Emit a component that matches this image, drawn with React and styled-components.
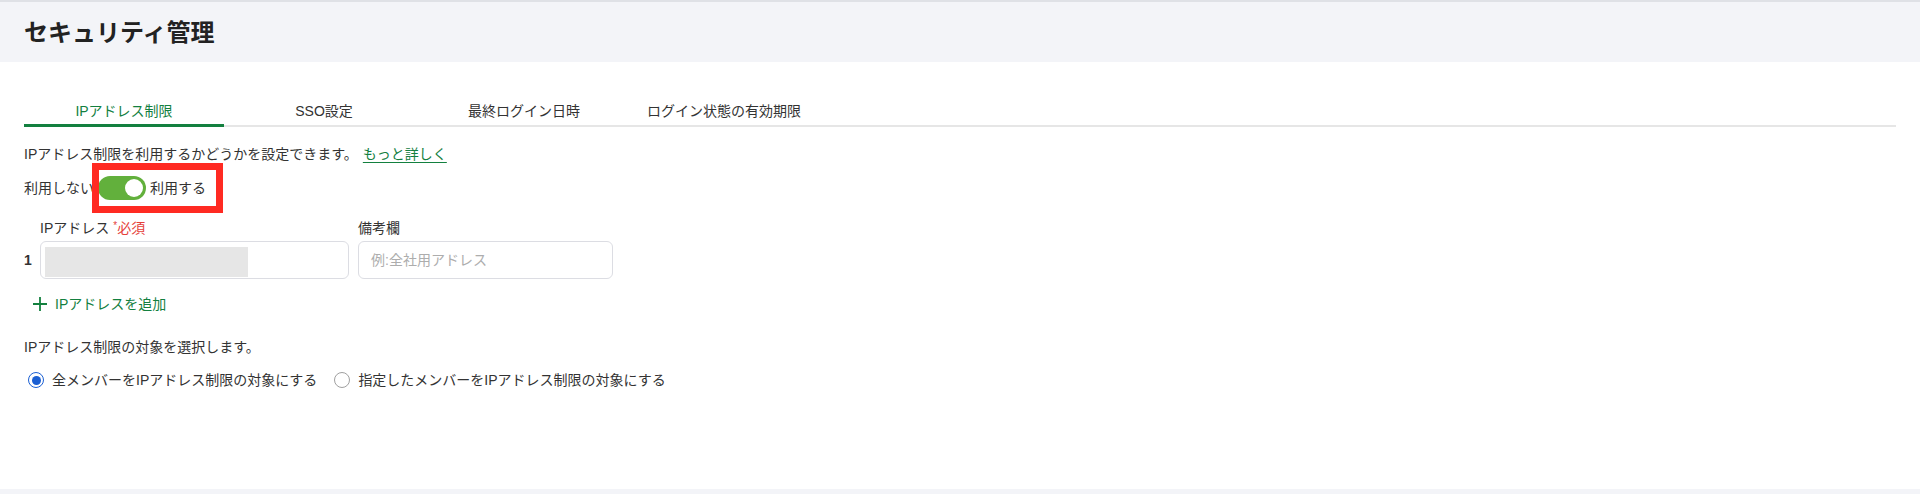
import React, { useState } from 'react';
import styled, { createGlobalStyle } from 'styled-components';

const GREEN = '#13803f';
const TOGGLE_GREEN = '#62b03c';
const TEXT = '#333333';

const GlobalStyle = createGlobalStyle`
  html, body {
    margin: 0;
    padding: 0;
    background: #f3f4f8;
  }
  body {
    font-family: "Liberation Sans", "Noto Sans CJK JP", sans-serif;
    color: ${TEXT};
  }
`;

const Page = styled.div`
  height: 494px;
  background: #f3f4f8;
  border-top: 2px solid #dfe1e6;
  box-sizing: border-box;
  overflow: hidden;
`;

const Header = styled.header`
  height: 60px;
  display: flex;
  align-items: center;
  padding: 1px 24px 0;
  box-sizing: border-box;
`;

const Title = styled.h1`
  margin: 0;
  font-size: 24px;
  font-weight: 700;
  line-height: 32px;
  color: #222;
`;

const Panel = styled.main`
  height: 427px;
  background: #fff;
  padding: 39px 24px 0;
  box-sizing: border-box;
  font-size: 14px;
  line-height: 20px;
`;

const TabList = styled.div`
  display: flex;
  border-bottom: 2px solid #e6e6e6;
`;

const Tab = styled.button`
  min-width: 200px;
  padding: 0 12px 3px;
  margin-bottom: -2px;
  border: 0;
  border-bottom: 3px solid ${(p) => (p.$active ? GREEN : 'transparent')};
  background: none;
  font: inherit;
  font-size: 14px;
  line-height: 20px;
  color: ${(p) => (p.$active ? GREEN : TEXT)};
  cursor: pointer;
`;

const Description = styled.p`
  margin: ${(p) => p.$top}px 0 0;
`;

const Link = styled.a`
  margin-left: 5px;
  color: ${GREEN};
  text-decoration: underline;
  text-underline-offset: 3px;
`;

const ToggleRow = styled.div`
  margin-top: 12px;
  display: flex;
  align-items: center;
  gap: 4px;
  height: 24px;
`;

const ToggleGroup = styled.span`
  position: relative;
  display: inline-flex;
  align-items: center;
  gap: 4px;
  height: 24px;
`;

const Switch = styled.button`
  position: relative;
  display: block;
  width: 48px;
  height: 24px;
  margin: 0;
  padding: 0;
  border: 0;
  border-radius: 12px;
  background: ${(p) => (p.$on ? TOGGLE_GREEN : '#c4c4c4')};
  cursor: pointer;

  &::after {
    content: '';
    position: absolute;
    top: 3px;
    left: ${(p) => (p.$on ? 27 : 3)}px;
    width: 18px;
    height: 18px;
    border-radius: 50%;
    background: #fff;
  }
`;

/* red annotation frame drawn over the switch */
const Highlight = styled.span`
  position: absolute;
  top: -13px;
  left: -6px;
  width: 131px;
  height: 50px;
  border: 7px solid #ff2a22;
  box-sizing: border-box;
  pointer-events: none;
`;

const FieldGrid = styled.div`
  margin-top: 18px;
  display: grid;
  grid-template-columns: 7px 309px 255px;
  grid-template-rows: 20px 38px;
  column-gap: 9px;
  row-gap: 3px;
`;

const Label = styled.span`
  grid-column: ${(p) => p.$col};
  white-space: nowrap;
  line-height: 20px;
`;

const Required = styled.span`
  margin-left: 4px;
  color: #e5413a;
`;

const Asterisk = styled.span`
  position: relative;
  top: -4px;
  font-size: 10px;
  line-height: 0;
`;

const Index = styled.span`
  align-self: center;
  font-weight: 700;
`;

const Field = styled.div`
  height: 38px;
  border: 1px solid #dcdde3;
  border-radius: 6px;
  box-sizing: border-box;
  display: flex;
  align-items: ${(p) => (p.$masked ? 'flex-start' : 'center')};
  padding: ${(p) => (p.$masked ? '5px 0 0 4px' : '0 12px')};
  color: #adadad;
`;

const Mask = styled.span`
  width: 203px;
  height: 30px;
  background: #e6e6e6;
`;

const AddButton = styled.button`
  margin-top: 15px;
  display: flex;
  align-items: center;
  gap: 7px;
  padding: 0 0 0 8px;
  height: 20px;
  border: 0;
  background: none;
  font: inherit;
  color: ${GREEN};
  cursor: pointer;
`;

const RadioRow = styled.div`
  margin-top: 13px;
  display: flex;
  align-items: center;
  gap: 17px;
  padding-left: 4px;
`;

const RadioOption = styled.label`
  display: flex;
  align-items: center;
  gap: 8px;
  cursor: pointer;
`;

const RadioMark = styled.span`
  width: 16px;
  height: 16px;
  border-radius: 50%;
  box-sizing: border-box;
  border: ${(p) => (p.$checked ? '1.5px solid #1b5fd3' : '1.5px solid #a0a0a0')};
  display: flex;
  align-items: center;
  justify-content: center;

  &::after {
    content: '';
    width: 9px;
    height: 9px;
    border-radius: 50%;
    background: ${(p) => (p.$checked ? '#1b5fd3' : 'transparent')};
  }
`;

const TABS = ['IPアドレス制限', 'SSO設定', '最終ログイン日時', 'ログイン状態の有効期限'];
const TARGETS = ['全メンバーをIPアドレス制限の対象にする', '指定したメンバーをIPアドレス制限の対象にする'];

const PlusIcon = () => (
  <svg width="16" height="16" viewBox="0 0 16 16" fill="none">
    <path d="M8 1v14M1 8h14" stroke={GREEN} strokeWidth="1.8" />
  </svg>
);

export default function App() {
  const [tab, setTab] = useState(0);
  const [enabled, setEnabled] = useState(true);
  const [target, setTarget] = useState(0);

  return (
    <Page>
      <GlobalStyle />
      <Header>
        <Title>セキュリティ管理</Title>
      </Header>
      <Panel>
        <TabList>
          {TABS.map((label, i) => (
            <Tab key={label} $active={tab === i} onClick={() => setTab(i)}>
              {label}
            </Tab>
          ))}
        </TabList>

        <Description $top={17}>
          IPアドレス制限を利用するかどうかを設定できます。
          <Link href="#">もっと詳しく</Link>
        </Description>

        <ToggleRow>
          <span>利用しない</span>
          <ToggleGroup>
            <Switch $on={enabled} onClick={() => setEnabled(!enabled)} aria-label="IPアドレス制限" />
            <span>利用する</span>
            <Highlight />
          </ToggleGroup>
        </ToggleRow>

        <FieldGrid>
          <Label $col={2}>
            IPアドレス
            <Required>
              <Asterisk>*</Asterisk>必須
            </Required>
          </Label>
          <Label $col={3}>備考欄</Label>
          <Index>1</Index>
          <Field $masked>
            <Mask />
          </Field>
          <Field>例:全社用アドレス</Field>
        </FieldGrid>

        <AddButton>
          <PlusIcon />
          IPアドレスを追加
        </AddButton>

        <Description $top={23}>IPアドレス制限の対象を選択します。</Description>

        <RadioRow>
          {TARGETS.map((label, i) => (
            <RadioOption key={label} onClick={() => setTarget(i)}>
              <RadioMark $checked={target === i} />
              {label}
            </RadioOption>
          ))}
        </RadioRow>
      </Panel>
    </Page>
  );
}
